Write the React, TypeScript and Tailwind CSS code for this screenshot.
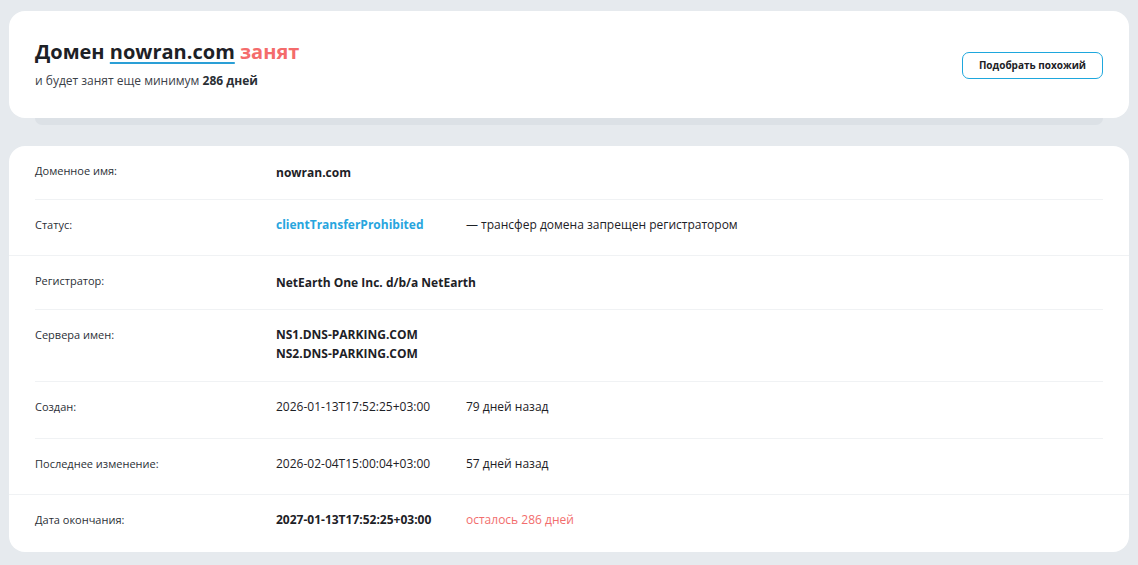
import React from "react";

type Row = {
  label: string;
  full?: boolean;
  content: React.ReactNode;
  h: string;
};

const font = { fontFamily: '"Open Sans", "Noto Sans", sans-serif' };

export default function App() {
  const rows: Row[] = [
    {
      label: "Доменное имя:",
      h: "h-[54px]",
      content: <span className="font-bold text-[12px] text-[#1d2126]">nowran.com</span>,
    },
    {
      label: "Статус:",
      h: "h-[55px]",
      full: true,
      content: (
        <div className="flex">
          <span className="w-[190px] font-bold text-[12px] text-[#28a5de]">clientTransferProhibited</span>
          <span className="text-[12px] text-[#1d2126]">— трансфер домена запрещен регистратором</span>
        </div>
      ),
    },
    {
      label: "Регистратор:",
      h: "h-[54px]",
      content: <span className="font-bold text-[12px] text-[#1d2126]">NetEarth One Inc. d/b/a NetEarth</span>,
    },
    {
      label: "Сервера имен:",
      h: "h-[72px]",
      content: (
        <div className="-mt-[2px] flex flex-col font-bold text-[12px] leading-[19px] text-[#1d2126]">
          <span>NS1.DNS-PARKING.COM</span>
          <span>NS2.DNS-PARKING.COM</span>
        </div>
      ),
    },
    {
      label: "Создан:",
      h: "h-[57px]",
      content: (
        <div className="flex text-[12px] text-[#1d2126]">
          <span className="w-[190px]">2026-01-13T17:52:25+03:00</span>
          <span>79 дней назад</span>
        </div>
      ),
    },
    {
      label: "Последнее изменение:",
      h: "h-[55px]",
      full: true,
      content: (
        <div className="flex text-[12px] text-[#1d2126]">
          <span className="w-[190px]">2026-02-04T15:00:04+03:00</span>
          <span>57 дней назад</span>
        </div>
      ),
    },
    {
      label: "Дата окончания:",
      h: "h-[57px]",
      content: (
        <div className="flex text-[12px]">
          <span className="w-[190px] font-bold text-[#1d2126]">2027-01-13T17:52:25+03:00</span>
          <span className="text-[#f26d6d]">осталось 286 дней</span>
        </div>
      ),
    },
  ];

  return (
    <div className="min-h-[565px] w-full bg-[#e6eaee] px-[9px] pt-[11px] pb-[14px]" style={font}>
      <div className="flex flex-col">
        <div className="flex h-[107px] items-center justify-between rounded-[16px] bg-white px-[26px]">
          <div className="flex flex-col pb-[3px]">
            <div className="text-[20px] font-bold leading-[28px] text-[#1d2126]">
              Домен{" "}
              <span className="underline decoration-[#2a9fd6] decoration-[1.5px] underline-offset-[3px]">nowran.com</span>{" "}
              <span className="text-[#f46b6b]">занят</span>
            </div>
            <div className="mt-[6px] text-[12px] leading-[17px] text-[#3b4148]">
              и будет занят еще минимум <span className="font-bold text-[#2a2f35]">286 дней</span>
            </div>
          </div>
          <button className="mt-[2px] flex h-[27px] w-[141px] items-center justify-center rounded-[7px] border border-[#1ea7dd] bg-white text-[10px] font-bold text-[#1d2126]">
            Подобрать похожий
          </button>
        </div>
        <div className="mx-[26px] h-[7px] rounded-b-[8px] bg-[#dce1e6]" />
        <div className="mt-[21px] flex flex-col rounded-[16px] bg-white">
          {rows.map((r, i) => {
            const last = i === rows.length - 1;
            const inner = (
              <div
                className={`flex ${r.h} pt-[17px] ${
                  !r.full && !last ? "border-b border-[#f0f2f4]" : ""
                }`}
              >
                <div className="w-[241px] shrink-0 text-[11px] leading-[16px] text-[#2b3036]">{r.label}</div>
                <div className="leading-[16px]">{r.content}</div>
              </div>
            );
            return (
              <div key={i} className={`px-[26px] ${r.full ? "border-b border-[#f0f2f4]" : ""}`}>
                {inner}
              </div>
            );
          })}
        </div>
      </div>
    </div>
  );
}
